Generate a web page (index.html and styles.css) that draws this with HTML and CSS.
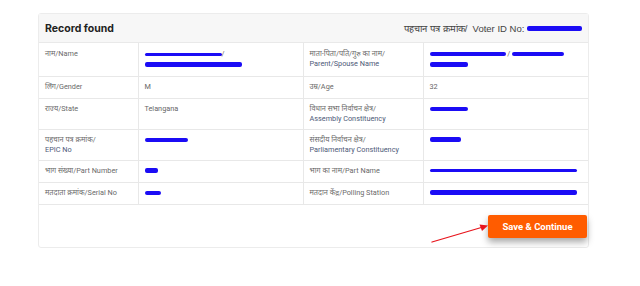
FILE: index.html
```html
<!DOCTYPE html>
<html lang="hi">
<head>
<meta charset="utf-8">
<title>Record found</title>
<link rel="stylesheet" href="styles.css">
</head>
<body>
<div class="card">
  <div class="card-header">
    <span class="title">Record found</span>
    <span class="voter">पहचान पत्र क्रमांक/&nbsp; Voter ID No: <span class="red thick w55"></span></span>
  </div>
  <table class="details">
    <colgroup>
      <col class="c1"><col class="c2"><col class="c3"><col class="c4">
    </colgroup>
    <tr class="two">
      <td class="lbl">नाम/Name</td>
      <td><span class="red thin w77"></span>/<br><span class="red thick w97"></span></td>
      <td class="lbl">माता-पिता/पति/गुरु का नाम/<br><span class="sub">Parent/Spouse Name</span></td>
      <td><span class="red mid w76"></span> / <span class="red mid w52"></span><br><span class="red thick w38"></span></td>
    </tr>
    <tr>
      <td class="lbl">लिंग/Gender</td>
      <td class="val">M</td>
      <td class="lbl">उम्र/Age</td>
      <td class="val">32</td>
    </tr>
    <tr class="two">
      <td class="lbl">राज्य/State</td>
      <td class="val">Telangana</td>
      <td class="lbl">विधान सभा निर्वाचन क्षेत्र/<br><span class="sub">Assembly Constituency</span></td>
      <td><span class="red mid w38"></span></td>
    </tr>
    <tr class="two">
      <td class="lbl">पहचान पत्र क्रमांक/<br><span class="sub">EPIC No</span></td>
      <td><span class="red mid w43"></span></td>
      <td class="lbl">संसदीय निर्वाचन क्षेत्र/<br><span class="sub">Parliamentary Constituency</span></td>
      <td><span class="red thick w31"></span></td>
    </tr>
    <tr>
      <td class="lbl">भाग संख्या/Part Number</td>
      <td><span class="red thick w13"></span></td>
      <td class="lbl">भाग का नाम/Part Name</td>
      <td><span class="red thin w147"></span></td>
    </tr>
    <tr>
      <td class="lbl">मतदाता क्रमांक/Serial No</td>
      <td><span class="red mid w16"></span></td>
      <td class="lbl">मतदान केंद्र/Polling Station</td>
      <td><span class="red thick w147"></span></td>
    </tr>
  </table>
  <div class="card-footer">
    <button class="save" type="button">Save &amp; Continue</button>
  </div>
  <svg class="arrow" width="64" height="24" viewBox="0 0 64 24" aria-hidden="true">
    <line x1="1" y1="22" x2="52" y2="7" stroke="#e8141c" stroke-width="1.3" stroke-linecap="round"/>
    <polygon points="57,5.5 48.5,4.5 51,11" fill="#e8141c"/>
  </svg>
</div>
</body>
</html>
```
FILE: styles.css
```css
* { box-sizing: border-box; }
html, body { margin: 0; padding: 0; background: #fff; }
body {
  font-family: Roboto, "Noto Sans", "Liberation Sans", sans-serif;
  color: #555;
}
.card {
  position: relative;
  margin: 13px 0 0 38px;
  width: 551px;
  height: 235px;
  border: 1px solid #ececec;
  border-radius: 3px;
  display: flex;
  flex-direction: column;
}
.card-header {
  height: 29px;
  background: #f7f7f7;
  border-bottom: 1px solid #e9e9e9;
  display: flex;
  align-items: center;
  justify-content: space-between;
  padding: 0 6px 0 6px;
}
.title {
  font-family: Inter, Roboto, sans-serif;
  font-weight: 700;
  font-size: 10.5px;
  color: #222;
}
.voter {
  font-family: "Liberation Sans", Roboto, sans-serif;
  font-size: 9.5px;
  font-weight: 400;
  color: #444;
  display: flex;
  align-items: center;
  white-space: pre;
}
.details {
  width: 549px;
  border-collapse: collapse;
  table-layout: fixed;
  font-size: 7.3px;
  line-height: 10px;
}
.c1 { width: 99px; }
.c2 { width: 165px; }
.c3 { width: 120px; }
.c4 { width: 165px; }
.details td {
  border: 1px solid #e8e8e8;
  padding: 5px 6px 5px 6px;
  height: 22px;
  vertical-align: top;
  color: #666;
}
.details tr.two td { height: 31px; }
.details tr:first-child td { border-top: 0; height: 33px; padding-top: 6px; }
.details td:first-child { border-left: 0; }
.details td:last-child { border-right: 0; }
.details td.lbl { color: #6a6a6a; }
.details .sub { color: #4e5a78; }
.details td.val { color: #666; }
.red {
  display: inline-block;
  vertical-align: middle;
  background: #1b0cf5;
  border-radius: 2px;
}
.thin { height: 3px; }
.mid { height: 4px; }
.thick { height: 5px; }
.w13 { width: 13px; }
.w16 { width: 16px; }
.w31 { width: 31px; }
.w38 { width: 38px; }
.w43 { width: 43px; }
.w52 { width: 52px; }
.w55 { width: 55px; }
.w76 { width: 76px; }
.w77 { width: 77px; }
.w97 { width: 97px; }
.w147 { width: 147px; }
.card-footer {
  flex: 1;
  display: flex;
  justify-content: flex-end;
  align-items: flex-start;
  padding: 10px 1px 0 0;
}
.save {
  width: 99px;
  height: 23px;
  border: 0;
  border-radius: 2px;
  background: #ff5c00;
  color: #fff;
  font-family: Roboto, "Liberation Sans", sans-serif;
  font-weight: 700;
  font-size: 9.5px;
  box-shadow: 0 4px 7px rgba(0,0,0,0.35);
  padding: 0;
}
.arrow {
  position: absolute;
  left: 392px;
  top: 206px;
}
```
